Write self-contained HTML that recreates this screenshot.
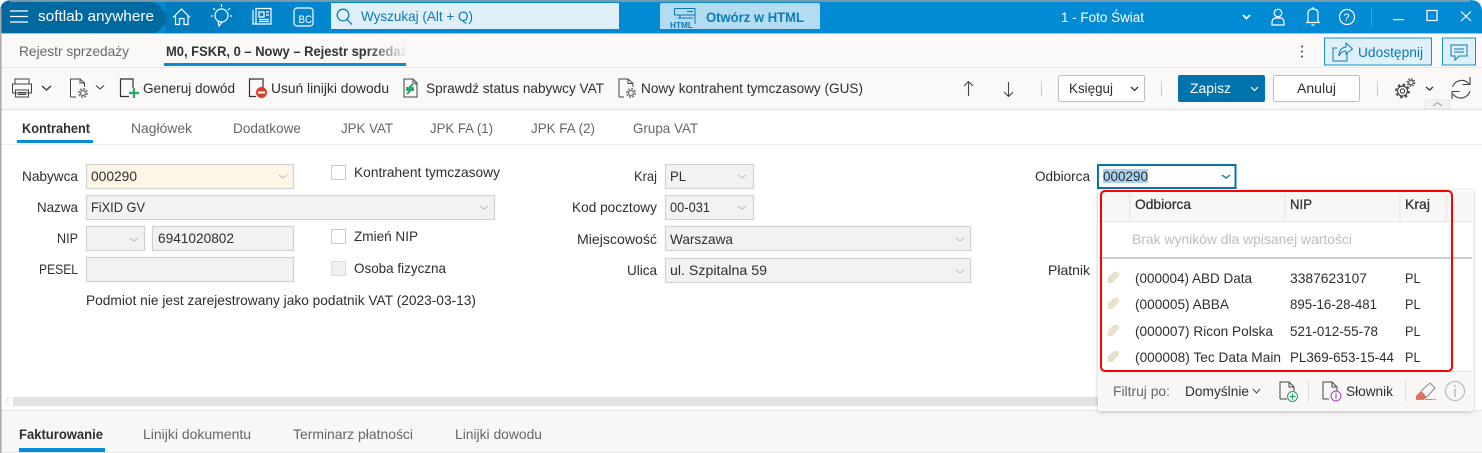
<!DOCTYPE html>
<html><head><meta charset="utf-8"><style>
html,body{margin:0;padding:0;background:#fff;width:1482px;height:453px;overflow:hidden}
svg{display:block}
text{font-family:"Liberation Sans",sans-serif;font-size:14px;fill:#2e2e2e}
.g{fill:#666}.w{fill:#fff}.b{font-weight:bold}
.i{fill:none;stroke:#444;stroke-width:1}
.f{fill:#f2f2f2;stroke:#d2d2d2;stroke-width:1.2}
.ch{fill:none;stroke:#bbb;stroke-width:1}
.hi{fill:none;stroke:#fff;stroke-width:1.2}
.dk{fill:none;stroke:#333;stroke-width:1.3}
</style></head><body>
<svg width="1482" height="453" viewBox="0 0 1482 453" xmlns="http://www.w3.org/2000/svg">
<defs>
<linearGradient id="hd" x1="0" x2="1" y1="0" y2="0"><stop offset="0" stop-color="#0079bb"/><stop offset="1" stop-color="#028bd4"/></linearGradient>
<linearGradient id="fd" x1="0" x2="1" y1="0" y2="0"><stop offset="0" stop-color="#faf9f8" stop-opacity="0"/><stop offset="1" stop-color="#faf9f8"/></linearGradient>
<filter id="sh" x="-5%" y="-5%" width="110%" height="110%"><feDropShadow dx="0" dy="1" stdDeviation="2" flood-color="#000" flood-opacity=".25"/></filter>
</defs>
<rect width="1482" height="453" fill="#fff"/>
<!-- header -->
<path d="M0 12Q0 0 12 0H1470Q1482 0 1482 12V34H0Z" fill="#028bd4"/>
<rect x="165" y="1" width="200" height="32" fill="url(#hd)"/>
<path d="M1 33V10Q1 1 10 1H152Q166 8 166 19Q164 28 155 33Z" fill="#00699f"/>
<path d="M10 1H1470" stroke="#a0a0a0" stroke-width="1.5" fill="none"/>
<rect x="0" y="33" width="1482" height="1" fill="#8ccdf0"/>
<path d="M10 11H28M10 16.5H28M10 22H28" stroke="#fff" stroke-width="1.3"/>
<text x="38" y="21" class="w" style="font-size:15px" lengthAdjust="spacingAndGlyphs" textLength="116">softlab anywhere</text>
<path d="M173 17.5L181.500 9L190 17.500M175.500 15.500V24.500H179.500V18.500H184V24.500H188V15.500" class="hi"/>
<circle cx="221.500" cy="15.500" r="6.500" class="hi"/><path d="M218 21L219 26L222 22M221.500 4V7M213 8L215 10M230 8L228 10M211 16H213M230 16H232" class="hi"/>
<path d="M253 10V24H271V8.500H256V24M259 12H264V17H259ZM266 12H269M266 15H269M259 19.500H269M259 21.500H269" class="hi"/>
<rect x="294" y="8" width="19" height="18" rx="3" class="hi"/>
<text x="298.500" y="23" class="w" style="font-size:11px" lengthAdjust="spacingAndGlyphs" textLength="13.500">BC</text>
<rect x="331" y="3" width="288" height="26" fill="#dff0fa"/>
<circle cx="343" cy="15" r="5.800" fill="none" stroke="#0a7fc0" stroke-width="1.300"/><path d="M347 19.500L352 24.500" stroke="#0a7fc0" stroke-width="1.300"/>
<text x="361" y="21" style="fill:#0a78b4;font-size:14px" lengthAdjust="spacingAndGlyphs" textLength="112">Wyszukaj (Alt + Q)</text>
<path d="M660 5Q660 3 662 3H818Q820 3 820 5V29H660Z" fill="#b3dcf3"/>
<path d="M674.500 8.500H695V24M674.500 8.500V15M674.500 15H695M678 18H680V15M678 18H693M687 11.500H693" fill="none" stroke="#0a78b4" stroke-width="1"/>
<text x="670" y="28" style="fill:#0a78b4;font-size:8.500px;font-weight:bold" lengthAdjust="spacingAndGlyphs" textLength="23">HTML</text>
<text x="706" y="22" class="b" style="fill:#0d7cb6;font-size:13.500px" lengthAdjust="spacingAndGlyphs" textLength="98">Otwórz w HTML</text>
<text x="1061" y="22" class="w" lengthAdjust="spacingAndGlyphs" textLength="83">1 - Foto Świat</text>
<path d="M1243 15L1246.500 18.500L1250 15" fill="none" stroke="#fff" stroke-width="1.800"/>
<circle cx="1278" cy="13" r="3.800" class="hi"/><path d="M1272 25V22.500Q1272 19 1275 18H1281Q1284 19 1284 22.500V25Z" class="hi"/>
<path d="M1308 22V13.500Q1308 9 1313 9Q1318 9 1318 13.500V22M1306 22.500H1320M1311.500 25H1314.500M1313 7V9" class="hi"/>
<circle cx="1347" cy="17" r="7.500" class="hi"/>
<text x="1343.500" y="21" class="w" style="font-size:11px">?</text>
<rect x="1371" y="8" width="1" height="19" fill="#3aa5de"/>
<rect x="1393" y="19" width="11" height="1.200" fill="#fff"/>
<rect x="1427" y="10.500" width="10" height="10" class="hi"/>
<path d="M1461 11.500L1471 21M1471 11.500L1461 21" class="hi"/>
<!-- tab bar -->
<rect y="34" width="1482" height="75" fill="#faf9f8"/>
<rect y="67" width="1482" height="1" fill="#e8e8e8"/>
<text x="19" y="56" class="g" lengthAdjust="spacingAndGlyphs" textLength="110">Rejestr sprzedaży</text>
<text x="166" y="56" class="b" style="fill:#333;font-size:13.500px" lengthAdjust="spacingAndGlyphs" textLength="241">M0, FSKR, 0 – Nowy – Rejestr sprzedaż</text>
<rect x="366" y="42" width="42" height="20" fill="url(#fd)"/>
<rect x="164" y="63" width="242" height="3" fill="#0a8bd6"/>
<circle cx="1302" cy="46.500" r="1" fill="#444"/><circle cx="1302" cy="51.500" r="1" fill="#444"/><circle cx="1302" cy="56.500" r="1" fill="#444"/>
<rect x="1324.500" y="38" width="107" height="27" fill="#dff0fa" stroke="#1b8fd0"/>
<path d="M1337 48H1333V61H1347V53M1339 56Q1339 48 1346 47V43L1352.500 49L1346 54V51Q1341 51 1339 56Z" fill="none" stroke="#0a78b4" stroke-width="1"/>
<text x="1358" y="57" style="fill:#0a78b4" lengthAdjust="spacingAndGlyphs" textLength="65">Udostępnij</text>
<rect x="1442.500" y="38" width="33" height="27" fill="#dff0fa" stroke="#1b8fd0"/>
<path d="M1451 45H1467V56H1459L1455 60V56H1451Z" fill="none" stroke="#0a78b4" stroke-width="1"/><path d="M1454 49H1464M1454 52H1464" stroke="#0a78b4"/>
<!-- toolbar -->
<path d="M15 84V79H29V84M12.500 84H31.500V93H12.500ZM15.500 90V97H28.500V90ZM18 92.500H26M18 94.500H26" class="i"/>
<path d="M42 86L46.500 90L51 86" class="dk"/>
<path d="M70.500 97V79H80L84.500 83V87M80 79V83H84.500M70.500 97H76" class="i"/>
<circle cx="83" cy="93" r="2.500" fill="none" stroke="#777" stroke-width="1.300"/><circle cx="83" cy="93" r="4.200" fill="none" stroke="#777" stroke-width="1.600" stroke-dasharray="2 1.300"/>
<path d="M96 85.500L100 89L104 85.500" class="dk" style="stroke-width:1"/>
<path d="M129 96.500H120.500V79H133V88" fill="none" stroke="#333" stroke-width="1.200"/>
<path d="M129 93H139M134 88V98" stroke="#2aa866" stroke-width="2.200"/>
<text x="143" y="93" lengthAdjust="spacingAndGlyphs" textLength="92">Generuj dowód</text>
<path d="M256 96.500H249.500V79H263V88" fill="none" stroke="#333" stroke-width="1.200"/>
<circle cx="261.500" cy="92.500" r="5.500" fill="#d9402b"/><rect x="258" y="91.500" width="7" height="2" fill="#fff"/>
<text x="271" y="93" lengthAdjust="spacingAndGlyphs" textLength="118">Usuń linijki dowodu</text>
<path d="M404 79H413L417 83V97H404Z" class="i"/>
<path d="M413 79V83H417" class="i"/>
<path d="M413 84L409 88H413V91M416 85V84M407 94L411 90H407V87" stroke="#1f9a5a" stroke-width="1.800" fill="none"/>
<text x="426" y="93" lengthAdjust="spacingAndGlyphs" textLength="178">Sprawdź status nabywcy VAT</text>
<path d="M619 97V79H628L633 83.500V87M628 79V83.500H633M619 97H624" class="i"/>
<circle cx="631" cy="93" r="2.500" fill="none" stroke="#777" stroke-width="1.300"/><circle cx="631" cy="93" r="4.200" fill="none" stroke="#777" stroke-width="1.600" stroke-dasharray="2 1.300"/>
<text x="641" y="93" lengthAdjust="spacingAndGlyphs" textLength="222">Nowy kontrahent tymczasowy (GUS)</text>
<path d="M968.500 82V96M964 86L968.500 81.500L973 86M1008.500 82V96M1004 92L1008.500 96.500L1013 92" fill="none" stroke="#444" stroke-width="1.100"/>
<rect x="1041" y="81" width="1" height="15" fill="#ccc"/>
<rect x="1058.500" y="75.500" width="86" height="26" rx="2" fill="#fff" stroke="#bdbdbd"/>
<text x="1069" y="93" lengthAdjust="spacingAndGlyphs" textLength="44">Księguj</text>
<path d="M1131 87L1134.500 90.500L1138 87" class="dk"/>
<rect x="1161" y="81" width="1" height="15" fill="#ccc"/>
<rect x="1178" y="75" width="87" height="27" rx="2" fill="#0073ad"/>
<text x="1190" y="93" class="w" lengthAdjust="spacingAndGlyphs" textLength="41">Zapisz</text>
<path d="M1251 87L1254.500 90.500L1258 87" class="hi"/>
<rect x="1273.500" y="75.500" width="86" height="26" rx="2" fill="#fff" stroke="#bdbdbd"/>
<text x="1297" y="93" lengthAdjust="spacingAndGlyphs" textLength="39">Anuluj</text>
<rect x="1377" y="81" width="1" height="15" fill="#ccc"/>
<circle cx="1402.500" cy="91" r="2.200" fill="none" stroke="#444" stroke-width="1.100"/>
<circle cx="1402.500" cy="91" r="5" fill="none" stroke="#444" stroke-width="1.200"/><circle cx="1402.500" cy="91" r="6.500" fill="none" stroke="#444" stroke-width="1.800" stroke-dasharray="2.500 2.600"/>
<circle cx="1411" cy="82.500" r="2.300" fill="none" stroke="#444" stroke-width="1.100"/><circle cx="1411" cy="82.500" r="3.700" fill="none" stroke="#444" stroke-width="1.300" stroke-dasharray="1.500 1.400"/>
<path d="M1426 87L1429.500 90L1433 87" class="dk"/>
<path d="M1452.500 87A9.500 9.500 0 0 1 1469 84M1470 77V84.500H1462.500M1470 91A9.500 9.500 0 0 1 1453 94M1452 99V91.500H1459.500" fill="none" stroke="#444" stroke-width="1.100"/>
<path d="M1425 109V102Q1425 100 1427 100H1448Q1450 100 1450 102V109Z" fill="#f3f3f3" stroke="#e2e2e2" stroke-width=".8"/><path d="M1433 106L1437.500 102.500L1442 106" fill="none" stroke="#aaa" stroke-width="1.200"/>
<rect y="109" width="1482" height="1" fill="#e0e0e0"/>
<!-- tabs -->
<text x="22" y="133" class="b" lengthAdjust="spacingAndGlyphs" textLength="68">Kontrahent</text>
<rect x="17" y="140" width="76" height="3" fill="#0a8bd6"/>
<text x="131" y="133" class="g" lengthAdjust="spacingAndGlyphs" textLength="61">Nagłówek</text>
<text x="233" y="133" class="g" lengthAdjust="spacingAndGlyphs" textLength="68">Dodatkowe</text>
<text x="341" y="133" class="g" lengthAdjust="spacingAndGlyphs" textLength="52">JPK VAT</text>
<text x="430" y="133" class="g" lengthAdjust="spacingAndGlyphs" textLength="63">JPK FA (1)</text>
<text x="531" y="133" class="g" lengthAdjust="spacingAndGlyphs" textLength="64">JPK FA (2)</text>
<text x="633" y="133" class="g" lengthAdjust="spacingAndGlyphs" textLength="65">Grupa VAT</text>
<rect y="144" width="1482" height="1" fill="#eeeeee"/>
<!-- form -->
<text x="22" y="181" lengthAdjust="spacingAndGlyphs" textLength="56">Nabywca</text>
<rect x="86.500" y="164.500" width="207" height="24" fill="#fdf5e6" stroke="#d2d2d2" stroke-width="1.200"/>
<text x="91" y="181" lengthAdjust="spacingAndGlyphs" textLength="46">000290</text><path d="M279 175L283 178L287 175" class="ch"/>
<text x="37" y="212" lengthAdjust="spacingAndGlyphs" textLength="41">Nazwa</text>
<rect x="86.500" y="195.500" width="408" height="24" class="f"/>
<text x="91" y="212" lengthAdjust="spacingAndGlyphs" textLength="54">FiXID GV</text><path d="M480 206L484 209L488 206" class="ch"/>
<text x="57" y="243" lengthAdjust="spacingAndGlyphs" textLength="21">NIP</text>
<rect x="86.500" y="226.500" width="58" height="24" class="f"/><path d="M130 238L134 241L138 238" class="ch"/>
<rect x="152.500" y="226.500" width="141" height="24" class="f"/>
<text x="158" y="243" lengthAdjust="spacingAndGlyphs" textLength="76">6941020802</text>
<text x="39" y="274" lengthAdjust="spacingAndGlyphs" textLength="39">PESEL</text>
<rect x="86.500" y="257.500" width="207" height="24" class="f"/>
<text x="86" y="305" lengthAdjust="spacingAndGlyphs" textLength="390">Podmiot nie jest zarejestrowany jako podatnik VAT (2023-03-13)</text>
<rect x="331.500" y="165.500" width="14" height="14" fill="#fff" stroke="#ccc"/>
<text x="354" y="177" lengthAdjust="spacingAndGlyphs" textLength="146">Kontrahent tymczasowy</text>
<rect x="331.500" y="229.500" width="14" height="14" fill="#fff" stroke="#ccc"/>
<text x="354" y="241" lengthAdjust="spacingAndGlyphs" textLength="64">Zmień NIP</text>
<rect x="331.500" y="261.500" width="14" height="14" fill="#f0f0f0" stroke="#ddd"/>
<text x="354" y="273" lengthAdjust="spacingAndGlyphs" textLength="92">Osoba fizyczna</text>
<text x="634" y="181" lengthAdjust="spacingAndGlyphs" textLength="23">Kraj</text>
<rect x="665.500" y="164.500" width="88" height="24" class="f"/><text x="670" y="181" lengthAdjust="spacingAndGlyphs" textLength="16">PL</text><path d="M738 175L742 178L746 175" class="ch"/>
<text x="572" y="212" lengthAdjust="spacingAndGlyphs" textLength="85">Kod pocztowy</text>
<rect x="665.500" y="195.500" width="88" height="24" class="f"/><text x="670" y="212" lengthAdjust="spacingAndGlyphs" textLength="40">00-031</text><path d="M738 206L742 209L746 206" class="ch"/>
<text x="577" y="244" lengthAdjust="spacingAndGlyphs" textLength="80">Miejscowość</text>
<rect x="665.500" y="226.500" width="305" height="24" class="f"/><text x="670" y="244" lengthAdjust="spacingAndGlyphs" textLength="63">Warszawa</text><path d="M956 238L960 241L964 238" class="ch"/>
<text x="627" y="275" lengthAdjust="spacingAndGlyphs" textLength="30">Ulica</text>
<rect x="665.500" y="258.500" width="305" height="24" class="f"/><text x="670" y="275" lengthAdjust="spacingAndGlyphs" textLength="97">ul. Szpitalna 59</text><path d="M956 270L960 273L964 270" class="ch"/>
<text x="1035" y="181" lengthAdjust="spacingAndGlyphs" textLength="55">Odbiorca</text>
<rect x="1098" y="165" width="137.500" height="23" fill="#fff" stroke="#0a73ad" stroke-width="2"/>
<rect x="1103" y="169" width="45" height="14" fill="#a8d1f0"/>
<text x="1103" y="181" lengthAdjust="spacingAndGlyphs" textLength="45">000290</text>
<path d="M1222 175L1226 178L1230 175" fill="none" stroke="#0a73ad" stroke-width="1.300"/>
<text x="1048" y="275" lengthAdjust="spacingAndGlyphs" textLength="42">Płatnik</text>
<!-- bottom -->
<path d="M9 397L6 401L9 405" class="ch" style="stroke:#ddd"/>
<rect x="13" y="397" width="1090" height="9" fill="#e3e3e3"/>
<rect y="410" width="1482" height="43" fill="#f8f7f6"/><rect y="410" width="1482" height="1" fill="#e6e6e6"/>
<rect y="452" width="1482" height="1" fill="#e6e6e6"/>
<text x="19" y="439" class="b" lengthAdjust="spacingAndGlyphs" textLength="84">Fakturowanie</text>
<rect x="19" y="448" width="86" height="4" fill="#0a8bd6"/>
<text x="143" y="439" class="g" lengthAdjust="spacingAndGlyphs" textLength="108">Linijki dokumentu</text>
<text x="293" y="439" class="g" lengthAdjust="spacingAndGlyphs" textLength="120">Terminarz płatności</text>
<text x="455" y="439" class="g" lengthAdjust="spacingAndGlyphs" textLength="87">Linijki dowodu</text>
<rect x="0" y="8" width="1.500" height="445" fill="#a8a8a8"/>
<!-- popup -->
<rect x="1098" y="190" width="375" height="221" fill="#fff" filter="url(#sh)"/>
<rect x="1099" y="191" width="373" height="30" fill="#f8f7f6"/>
<rect x="1099" y="221" width="373" height="1" fill="#e6e6e6"/>
<rect x="1129" y="194" width="1.500" height="25" fill="#eaeaea"/><rect x="1284" y="194" width="1.500" height="25" fill="#eaeaea"/><rect x="1399" y="194" width="1.500" height="25" fill="#eaeaea"/><rect x="1446" y="194" width="1.500" height="25" fill="#eaeaea"/>
<text x="1135" y="209" style="stroke:#333;stroke-width:.25" lengthAdjust="spacingAndGlyphs" textLength="56">Odbiorca</text>
<text x="1290" y="209" style="stroke:#333;stroke-width:.25" lengthAdjust="spacingAndGlyphs" textLength="22">NIP</text>
<text x="1405" y="209" style="stroke:#333;stroke-width:.25" lengthAdjust="spacingAndGlyphs" textLength="25">Kraj</text>
<text x="1132" y="244" style="fill:#bdbdbd" lengthAdjust="spacingAndGlyphs" textLength="220">Brak wyników dla wpisanej wartości</text>
<rect x="1099" y="257" width="373" height="2" fill="#cfcfcf"/>
<g fill="#e6e0cd">
<path d="M1107.500 283L1108 277L1114 272Q1117 271 1119 273Q1120 275 1118 277L1112 283Z"/>
<path d="M1107.500 309L1108 303L1114 298Q1117 297 1119 299Q1120 301 1118 303L1112 309Z"/>
<path d="M1107.500 336L1108 330L1114 325Q1117 324 1119 326Q1120 328 1118 330L1112 336Z"/>
<path d="M1107.500 362L1108 356L1114 351Q1117 350 1119 352Q1120 354 1118 356L1112 362Z"/>
</g>
<text x="1135" y="283" fill="#444" lengthAdjust="spacingAndGlyphs" textLength="117">(000004) ABD Data</text><text x="1290" y="283" lengthAdjust="spacingAndGlyphs" textLength="77">3387623107</text><text x="1405" y="283" lengthAdjust="spacingAndGlyphs" textLength="15.500">PL</text>
<text x="1135" y="309" lengthAdjust="spacingAndGlyphs" textLength="94">(000005) ABBA</text><text x="1290" y="309" lengthAdjust="spacingAndGlyphs" textLength="87">895-16-28-481</text><text x="1405" y="309" lengthAdjust="spacingAndGlyphs" textLength="15.500">PL</text>
<text x="1135" y="336" lengthAdjust="spacingAndGlyphs" textLength="138">(000007) Ricon Polska</text><text x="1290" y="336" lengthAdjust="spacingAndGlyphs" textLength="88">521-012-55-78</text><text x="1405" y="336" lengthAdjust="spacingAndGlyphs" textLength="15.500">PL</text>
<text x="1135" y="362" lengthAdjust="spacingAndGlyphs" textLength="146">(000008) Tec Data Main</text><text x="1290" y="362" lengthAdjust="spacingAndGlyphs" textLength="104">PL369-653-15-44</text><text x="1405" y="362" lengthAdjust="spacingAndGlyphs" textLength="15.500">PL</text>
<rect x="1099" y="372" width="373" height="38" fill="#f8f7f6"/><rect x="1099" y="371" width="373" height="1" fill="#e6e6e6"/>
<rect x="1101" y="191" width="351" height="180" rx="4" fill="none" stroke="#f00" stroke-width="2"/>
<text x="1113" y="396" class="g" lengthAdjust="spacingAndGlyphs" textLength="57">Filtruj po:</text>
<text x="1185" y="396" lengthAdjust="spacingAndGlyphs" textLength="64">Domyślnie</text>
<path d="M1253 389L1256.500 393L1260 389" class="i"/>
<path d="M1280 399V382H1289L1294 387V391M1289 382V387H1294M1280 399H1287" class="i"/>
<circle cx="1292.500" cy="396.500" r="5" fill="none" stroke="#1fa65a"/><path d="M1289.500 396.500H1295.500M1292.500 393.500V399.500" stroke="#1fa65a"/>
<rect x="1308" y="381" width="1" height="21" fill="#ddd"/>
<path d="M1323 399V382H1332L1337 387V391M1332 382V387H1337M1323 399H1329" class="i"/>
<circle cx="1336" cy="396" r="5" fill="none" stroke="#a43fb5"/><path d="M1336 394V399M1336 392.500V393.500" stroke="#a43fb5"/>
<text x="1346" y="396" lengthAdjust="spacingAndGlyphs" textLength="47">Słownik</text>
<rect x="1405" y="381" width="1" height="21" fill="#ddd"/>
<path d="M1416 396L1421 391L1427 397L1425 399H1416Z" fill="#e0705c"/>
<path d="M1421 391L1430 383L1435 388L1427 397" fill="none" stroke="#888"/><path d="M1416 399.500H1436" stroke="#999" stroke-dasharray="8 1"/>
<circle cx="1455" cy="391" r="9.500" fill="none" stroke="#bbb" stroke-width="1.200"/>
<path d="M1455 389V397M1455 385V387" stroke="#aaa" stroke-width="1.200"/>
</svg>
</body></html>
